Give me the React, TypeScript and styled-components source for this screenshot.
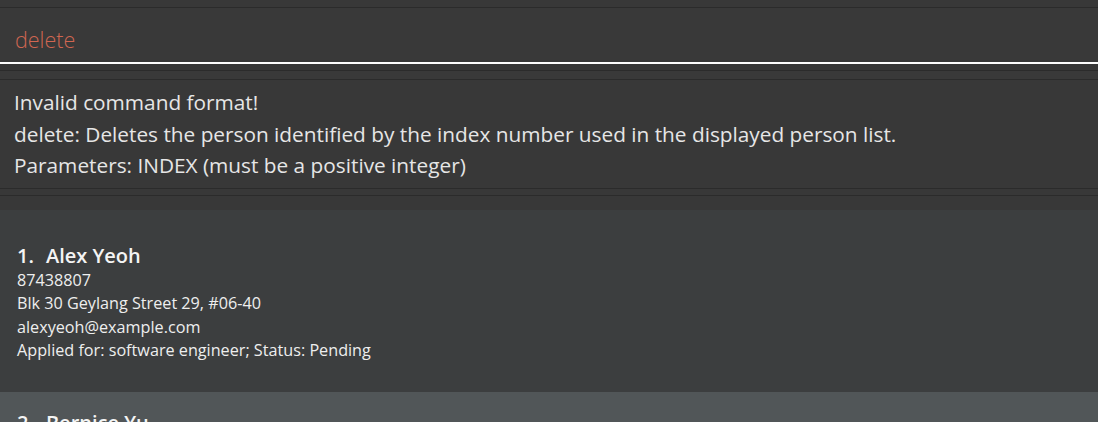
import React from "react";
import styled, { createGlobalStyle } from "styled-components";

const Global = createGlobalStyle`
  html, body { margin: 0; padding: 0; background: #383838; }
  body { font-family: "Open Sans", "Noto Sans", sans-serif; overflow: hidden; }
  #root { width: 1098px; height: 422px; overflow: hidden; }
`;

const Page = styled.div`
  display: flex;
  flex-direction: column;
  width: 1098px;
  height: 422px;
  overflow: hidden;
  background: #383838;
  & > * { flex-shrink: 0; }
`;

const Divider = styled.div<{ $h: number; $bg?: string }>`
  height: ${(p) => p.$h}px;
  background: ${(p) => p.$bg ?? "#383838"};
  border-top: 1px solid #2b2b2b;
`;

const TopStrip = styled.div`
  height: 7px;
  background: #383838;
`;

const CommandBox = styled.div`
  box-sizing: content-box;
  background: #393939;
  border-top: 1px solid #2b2b2b;
  border-bottom: 2px solid #ffffff;
  display: flex;
  align-items: center;
  padding: 8px 15px 0;
  height: 46px;
  font-weight: 300;
  font-size: 21.5px;
  color: #d06651;
`;

const Spacer = styled.div<{ $h: number }>`
  height: ${(p) => p.$h}px;
  background: #383838;
`;

const ResultDisplay = styled.div`
  border-top: 1px solid #2b2b2b;
  border-bottom: 1px solid #2b2b2b;
  background: #383838;
  height: 110px;
  padding: 7px 14px 0;
  box-sizing: border-box;
  color: #e6e6e6;
  font-size: 20.8px;
  line-height: 31.5px;
  font-weight: 400;
`;

const ResultLine = styled.div`
  white-space: nowrap;
`;

const List = styled.div`
  border-top: 1px solid #2b2b2b;
  margin-top: 6px;
  padding-top: 14px;
  background: #383838;
`;

const Card = styled.div<{ $odd: boolean; $first?: boolean }>`
  background: ${(p) => (p.$odd ? "#3c3e3f" : "#515658")};
  padding: ${(p) => (p.$first ? 33 : 18)}px 17px 30px;
  height: ${(p) => (p.$first ? 182 : 167)}px;
  box-sizing: border-box;
  color: #ffffff;
`;

const Name = styled.div`
  font-size: 20px;
  font-weight: 600;
  line-height: 26px;
  margin-bottom: 0;
  white-space: nowrap;
  color: #f4f4f4;
`;

const Index = styled.span`
  margin-right: 12px;
`;

const Detail = styled.div`
  font-size: 16.2px;
  line-height: 23.4px;
  color: #eeeeee;
  white-space: nowrap;
`;

type Person = {
  name: string;
  phone: string;
  address: string;
  email: string;
  role: string;
  status: string;
};

const people: Person[] = [
  {
    name: "Alex Yeoh",
    phone: "87438807",
    address: "Blk 30 Geylang Street 29, #06-40",
    email: "alexyeoh@example.com",
    role: "software engineer",
    status: "Pending",
  },
  {
    name: "Bernice Yu",
    phone: "99272758",
    address: "Blk 30 Lorong 3 Serangoon Gardens, #07-18",
    email: "berniceyu@example.com",
    role: "software engineer",
    status: "Pending",
  },
];

export default function App() {
  return (
    <Page>
      <Global />
      <TopStrip />
      <CommandBox>delete</CommandBox>
      <Spacer $h={6} />
      <Divider $h={8} $bg="#393939" />
      <ResultDisplay>
        <ResultLine>Invalid command format!</ResultLine>
        <ResultLine>
          delete: Deletes the person identified by the index number used in the displayed person list.
        </ResultLine>
        <ResultLine>Parameters: INDEX (must be a positive integer)</ResultLine>
      </ResultDisplay>
      <List>
        {people.map((p, i) => (
          <Card key={p.name} $odd={i % 2 === 0} $first={i === 0}>
            <Name>
              <Index>{i + 1}.</Index>
              {p.name}
            </Name>
            <Detail>{p.phone}</Detail>
            <Detail>{p.address}</Detail>
            <Detail>{p.email}</Detail>
            <Detail>
              Applied for: {p.role}; Status: {p.status}
            </Detail>
          </Card>
        ))}
      </List>
    </Page>
  );
}
